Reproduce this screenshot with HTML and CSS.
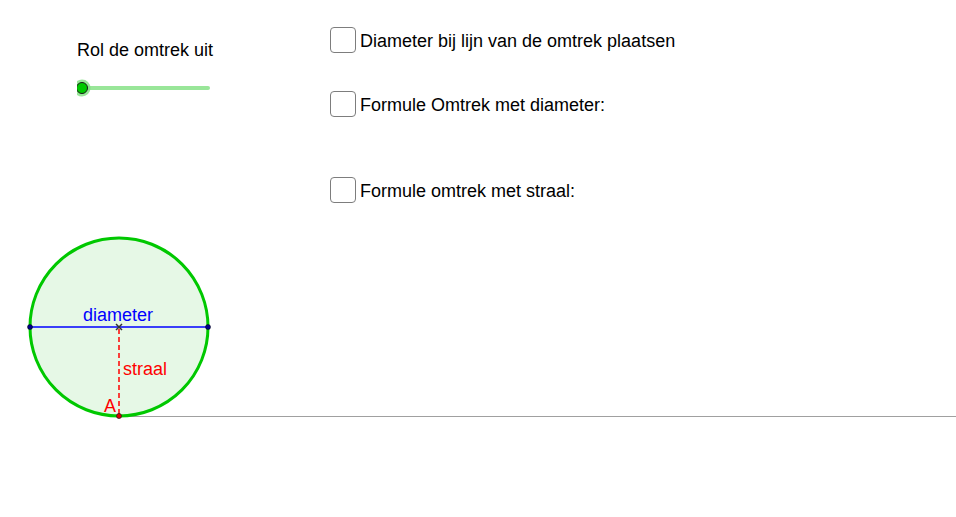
FILE: index.html
```html
<!DOCTYPE html>
<html lang="nl">
<head>
  <meta charset="UTF-8" />
  <title>Omtrek van een cirkel</title>
  <link rel="stylesheet" href="styles.css">
</head>
<body>
  <div class="applet">
    <div class="top">
      <div class="slider-box">
        <div class="slider-label">Rol de omtrek uit</div>
        <svg class="slider" width="140" height="20" viewBox="0 0 140 20">
          <line x1="5" y1="10" x2="131" y2="10" stroke="#99e699" stroke-width="4" stroke-linecap="round"/>
          <circle cx="5" cy="10" r="8.5" fill="#80e080" opacity="0.8"/>
          <circle cx="5" cy="10" r="5.5" fill="#00c800" stroke="#1a1a1a" stroke-width="1"/>
        </svg>
      </div>
      <div class="checks">
        <label class="check first"><span class="box"></span><span class="txt">Diameter bij lijn van de omtrek plaatsen</span></label>
        <label class="check second"><span class="box"></span><span class="txt">Formule Omtrek met diameter:</span></label>
        <label class="check third"><span class="box"></span><span class="txt">Formule omtrek met straal:</span></label>
      </div>
    </div>
    <svg class="canvas" width="956" height="287" viewBox="0 0 956 287">
      <line x1="119" y1="186.5" x2="956" y2="186.5" stroke="#a0a0a0" stroke-width="1"/>
      <circle cx="119" cy="97" r="89" fill="#e6f8e6" stroke="#00c800" stroke-width="3"/>
      <line x1="30" y1="97" x2="208" y2="97" stroke="#0000ff" stroke-width="1.5"/>
      <line x1="119" y1="99" x2="119" y2="186" stroke="#ff0000" stroke-width="1.5" stroke-dasharray="5 3"/>
      <path d="M116 94 L122 100 M122 94 L116 100" stroke="#333" stroke-width="1.5"/>
      <circle cx="30" cy="97" r="2.5" fill="#00008b" stroke="#000" stroke-width="0.5"/>
      <circle cx="208" cy="97" r="2.5" fill="#00008b" stroke="#000" stroke-width="0.5"/>
      <circle cx="119" cy="186" r="2.5" fill="#e00000" stroke="#222" stroke-width="0.8"/>
      <text x="83" y="91" class="lbl blue">diameter</text>
      <text x="123" y="145" class="lbl red">straal</text>
      <text x="104" y="182" class="lbl red">A</text>
    </svg>
  </div>
</body>
</html>
```

FILE: styles.css
```css
body {
  margin: 0;
  background: #fff;
  font-family: "Liberation Sans", Arial, sans-serif;
  color: #000;
}

.applet {
  width: 956px;
  height: 517px;
  overflow: hidden;
}

.top {
  display: flex;
  height: 230px;
}

.slider-box {
  width: 330px;
  box-sizing: border-box;
  padding: 39px 0 0 77px;
}

.slider-label {
  font-size: 18px;
  line-height: 22px;
}

.slider {
  display: block;
  margin: 17px 0 0 0;
}

.checks {
  display: flex;
  flex-direction: column;
  padding-top: 27px;
}

.check {
  display: flex;
  align-items: center;
  gap: 4px;
  font-size: 18px;
  height: 26px;
}

.check .txt {
  padding-top: 3px;
}

.check.second {
  margin-top: 38px;
}

.check.third {
  margin-top: 60px;
}

.box {
  width: 24px;
  height: 24px;
  border: 1px solid #7d7d7d;
  border-radius: 4px;
  background: #fff;
}

.canvas {
  display: block;
}

.lbl {
  font-family: "Liberation Sans", Arial, sans-serif;
  font-size: 18px;
}

.blue {
  fill: #0000ff;
}

.red {
  fill: #ff0000;
}
```
